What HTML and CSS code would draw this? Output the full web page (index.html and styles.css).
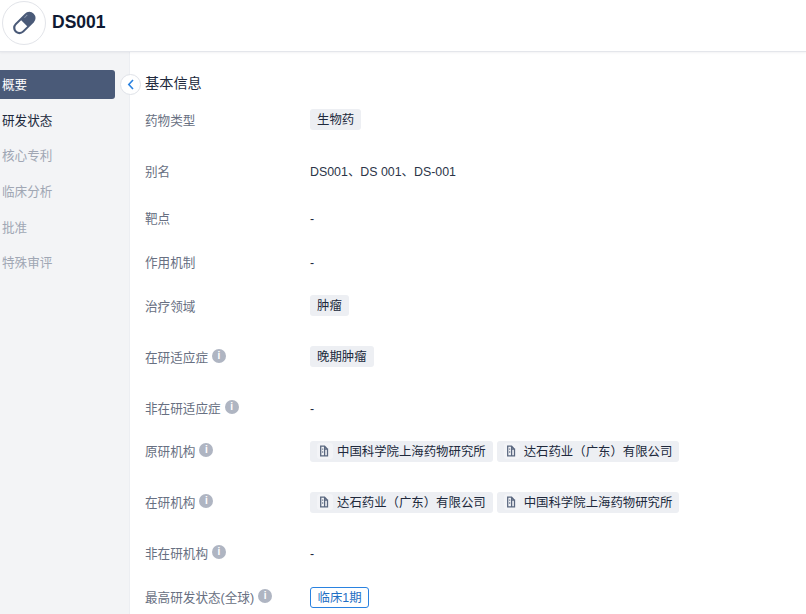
FILE: index.html
```html
<!DOCTYPE html>
<html lang="zh">
<head>
<meta charset="utf-8">
<title>DS001</title>
<link rel="stylesheet" href="styles.css">
</head>
<body>
<header class="top">
  <div class="logo">
    <svg width="34" height="34" viewBox="0 0 34 34"><g transform="rotate(-45 17 17)"><rect x="4" y="11" width="26.5" height="12.5" rx="6.25" fill="#4a5a78"/><path d="M17 13h-6.5a4.25 4.25 0 0 0 0 8.5H17z" fill="#fff"/><path d="M21 13.6h4" stroke="#8d99ad" stroke-width="1" fill="none"/></g></svg>
  </div>
  <h1 class="name">DS001</h1>
</header>
<div class="body">
  <nav class="side">
    <a class="nav active">概要</a>
    <a class="nav dark">研发状态</a>
    <a class="nav">核心专利</a>
    <a class="nav">临床分析</a>
    <a class="nav">批准</a>
    <a class="nav">特殊审评</a>
  </nav>
  <main class="main">
    <button class="collapse"><svg width="10" height="11" viewBox="0 0 10 11"><path d="M7 1 2.8 5.5 7 10" fill="none" stroke="#2a82e0" stroke-width="1.6"/></svg></button>
    <h2 class="title">基本信息</h2>
    <div class="row r1"><div class="label">药物类型</div><div class="value"><span class="tag">生物药</span></div></div>
    <div class="row r2"><div class="label">别名</div><div class="value plain">DS001、DS 001、DS-001</div></div>
    <div class="row r3"><div class="label">靶点</div><div class="value dash">-</div></div>
    <div class="row r4"><div class="label">作用机制</div><div class="value dash">-</div></div>
    <div class="row r5"><div class="label">治疗领域</div><div class="value"><span class="tag">肿瘤</span></div></div>
    <div class="row r6"><div class="label">在研适应症<i class="info">i</i></div><div class="value"><span class="tag">晚期肿瘤</span></div></div>
    <div class="row r7"><div class="label">非在研适应症<i class="info">i</i></div><div class="value dash">-</div></div>
    <div class="row r8"><div class="label">原研机构<i class="info">i</i></div><div class="value plain">
      <span class="tag org"><svg class="doc" viewBox="0 0 16 16"><path d="M3.7 3.2h3.9l2.9 3v6.6H3.7zM7.6 3.2v3h2.9v6.6H7.6zM5.2 6.2h1M5.2 9h1" fill="none" stroke="#5b6880" stroke-width="1.3"/></svg>中国科学院上海药物研究所</span>
      <span class="tag org"><svg class="doc" viewBox="0 0 16 16"><path d="M3.7 3.2h3.9l2.9 3v6.6H3.7zM7.6 3.2v3h2.9v6.6H7.6zM5.2 6.2h1M5.2 9h1" fill="none" stroke="#5b6880" stroke-width="1.3"/></svg>达石药业（广东）有限公司</span>
    </div></div>
    <div class="row r9"><div class="label">在研机构<i class="info">i</i></div><div class="value plain">
      <span class="tag org"><svg class="doc" viewBox="0 0 16 16"><path d="M3.7 3.2h3.9l2.9 3v6.6H3.7zM7.6 3.2v3h2.9v6.6H7.6zM5.2 6.2h1M5.2 9h1" fill="none" stroke="#5b6880" stroke-width="1.3"/></svg>达石药业（广东）有限公司</span>
      <span class="tag org"><svg class="doc" viewBox="0 0 16 16"><path d="M3.7 3.2h3.9l2.9 3v6.6H3.7zM7.6 3.2v3h2.9v6.6H7.6zM5.2 6.2h1M5.2 9h1" fill="none" stroke="#5b6880" stroke-width="1.3"/></svg>中国科学院上海药物研究所</span>
    </div></div>
    <div class="row r10"><div class="label">非在研机构<i class="info">i</i></div><div class="value dash">-</div></div>
    <div class="row r11"><div class="label">最高研发状态(全球)<i class="info">i</i></div><div class="value plain"><span class="phase">临床1期</span></div></div>
  </main>
</div>
</body>
</html>
```
FILE: styles.css
```css
* { box-sizing: border-box; }
html, body { margin: 0; height: 100%; overflow: hidden; }
body { width: 806px; height: 614px; background: #fff; font-family: "Liberation Sans", "Noto Sans CJK SC", sans-serif; font-size: 12.4px; color: #20293c; }
.top { height: 52px; display: flex; align-items: flex-start; gap: 6px; padding-left: 2px; border-bottom: 1px solid #e4e6eb; box-shadow: 0 1px 2px rgba(30,40,60,.06); position: relative; }
.logo { width: 44px; height: 44px; margin-top: 1px; border: 1px solid #e2e4e9; border-radius: 50%; display: flex; align-items: center; justify-content: center; }
.name { margin: 12px 0 0; font-size: 17.5px; line-height: 20px; font-weight: 700; color: #0f1a33; }
.body { display: flex; height: 562px; }
.side { width: 130px; flex: none; background: #f3f4f6; border-right: 1px solid #eceef2; padding-top: 18px; display: flex; flex-direction: column; font-size: 12.6px; }
.nav { height: 29px; width: 115px; margin-bottom: 6.7px; padding: 0 0 2px 2px; display: flex; align-items: center; color: #a0a7b4; }
.nav.active { background: #4a5a78; color: #fff; border-radius: 0 3px 3px 0; }
.nav.dark { color: #20293c; }
.main { flex: 1; position: relative; padding-left: 15px; }
.collapse { position: absolute; left: -10px; top: 22px; width: 21px; height: 21px; border-radius: 50%; border: 1px solid #dfe2e8; background: #fff; padding: 0; display: flex; align-items: center; justify-content: center; }
.title { margin: 0; padding-top: 23px; box-sizing: content-box; font-size: 14.2px; line-height: 17px; font-weight: 400; color: #20293c; height: 17px; }
.row { display: flex; align-items: center; min-height: 24px; }
.label { width: 165px; flex: none; font-size: 12.6px; color: #687082; display: flex; align-items: center; gap: 4px; }
.value { display: flex; align-items: center; gap: 4px; color: #20293c; }
.plain { padding-top: 2px; color: #2c3548; }
.dash { padding-top: 4px; }
.r1 { margin-top: 15px; }
.r2 { margin-top: 27px; }
.r3 { margin-top: 23px; }
.r4 { margin-top: 20px; }
.r5 { margin-top: 20px; }
.r6 { margin-top: 27px; }
.r7 { margin-top: 27px; }
.r8 { margin-top: 19px; }
.r9 { margin-top: 27px; }
.r10 { margin-top: 27px; }
.r11 { margin-top: 20px; }
.tag { height: 21px; padding: 0 7px; background: #edeff3; border-radius: 3px; display: inline-flex; align-items: center; color: #20293c; }
.org { gap: 4px; }
.doc { width: 16px; height: 16px; background: #f3f4f7; border-radius: 3px; }
.info { width: 14px; height: 14px; border-radius: 50%; background: #afb5c2; color: #fff; font: 700 10px/14px "Liberation Sans", sans-serif; text-align: center; }
.phase { height: 21px; padding: 0 6.5px; border: 1px solid #2a82e0; border-radius: 3px; color: #1f6fc4; display: inline-flex; align-items: center; }
```
